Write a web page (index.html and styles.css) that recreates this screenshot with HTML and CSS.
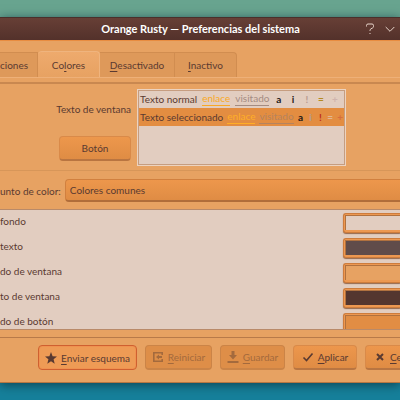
FILE: index.html
```html
<!DOCTYPE html>
<html lang="es">
<head>
<meta charset="utf-8">
<title>Orange Rusty — Preferencias del sistema</title>
<link rel="stylesheet" href="styles.css">
</head>
<body>
<main class="window">
  <header class="titlebar">
    <h1 class="title">Orange Rusty — Preferencias del sistema</h1>
    <button class="tool" aria-label="Ayuda"><svg width="10" height="12" viewBox="0 0 10 12"><path d="M1.5 3.500V2.500Q1.500 1 3 1H7Q8.500 1 8.500 2.500V3.500Q8.500 4.500 7.500 5L6 5.800Q5 6.300 5 7.500V8M5 10V11"/></svg></button>
    <button class="tool" aria-label="Minimizar"><svg width="10" height="12" viewBox="0 0 10 12"><path d="M.7 4L5 8.300L9.300 4"/></svg></button>
  </header>
  <nav class="tabs" role="tablist">
    <button class="tab tab-first" role="tab">ciones</button>
    <button class="tab active" role="tab" aria-selected="true">Co<u>l</u>ores</button>
    <button class="tab tab-wide" role="tab"><u>D</u>esactivado</button>
    <button class="tab" role="tab"><u>I</u>nactivo</button>
  </nav>
  <section class="sheet">
    <div class="preview">
      <div class="samples">
        <span>Texto de ventana</span>
        <button class="btn sample-btn">Botón</button>
      </div>
      <div class="view">
        <div class="line">
          <span>Texto normal</span><a class="link" href="#">enlace</a><a class="visited" href="#">visitado</a><b class="mark ink">a</b><b class="mark ink">i</b><b class="mark grey">!</b><b class="mark olive">=</b><b class="mark pale">+</b>
        </div>
        <div class="line selected">
          <span>Texto seleccionado</span><a class="link" href="#">enlace</a><a class="visited" href="#">visitado</a><b class="ink">a</b><b class="grey">i</b><b class="red">!</b><b class="light">=</b><b class="rust">+</b>
        </div>
      </div>
    </div>
    <div class="scheme">
      <label for="set">unto de color:</label>
      <select id="set"><option>Colores comunes</option></select>
    </div>
    <div class="list">
      <table>
        <tr><th scope="row">fondo</th><td><button class="swatch" aria-label="fondo"><span class="c-view"></span></button></td></tr>
        <tr><th scope="row">texto</th><td><button class="swatch" aria-label="texto"><span class="c-text"></span></button></td></tr>
        <tr><th scope="row">do de ventana</th><td><button class="swatch" aria-label="do de ventana"><span class="c-window"></span></button></td></tr>
        <tr><th scope="row">to de ventana</th><td><button class="swatch" aria-label="to de ventana"><span class="c-brown"></span></button></td></tr>
        <tr><th scope="row">do de botón</th><td><button class="swatch" aria-label="do de botón"><span class="c-button"></span></button></td></tr>
      </table>
    </div>
  </section>
  <footer class="actions">
    <button class="btn focus"><svg width="12" height="12" viewBox="0 0 12 12"><path d="M6 0L7.600 4.200L12 4.500L8.600 7.200L9.700 11.700L6 9.200L2.300 11.700L3.400 7.200L0 4.500L4.400 4.200Z"/></svg><span><u>E</u>nviar esquema</span></button>
    <button class="btn" disabled><svg width="12" height="12" viewBox="0 0 12 12"><path class="stroke thin" d="M10.200 4V1.800H1.800V10.200H10.200V8"/><path d="M4 6L7 3.500V5H10V7H7V8.500Z"/></svg><span><u>R</u>einiciar</span></button>
    <button class="btn save" disabled><svg width="12" height="12" viewBox="0 0 12 12"><path d="M4.500 0H7.500V4H10L6 8.500L2 4H4.500ZM.5 10H11.500V12H.5Z"/></svg><span><u>G</u>uardar</span></button>
    <button class="btn apply"><svg width="12" height="12" viewBox="0 0 12 12"><path class="stroke thin" d="M1.500 6.500L4.500 9.500L10.500 2.500"/></svg><span><u>A</u>plicar</span></button>
    <button class="btn close"><svg width="12" height="12" viewBox="0 0 12 12"><path class="stroke" d="M3 3L9 9M9 3L3 9"/></svg><span><u>C</u>e</span></button>
  </footer>
</main>
</body>
</html>
```
FILE: styles.css
```css
* { box-sizing: border-box; }
body {
  margin: 0;
  min-height: 100vh;
  padding: 17px 0 18px;
  overflow: hidden;
  background: linear-gradient(#68a48f, #68a48f 17px, #16809b 380px);
  color: #5a3a31;
  font: 10px/14px Lato, "Noto Sans", sans-serif;
}
button, select { font: inherit; color: inherit; margin: 0; padding: 0; border: 0; background: none; }
u { text-underline-offset: 2px; }
svg { flex: none; fill: currentColor; }
.stroke { fill: none; stroke: currentColor; stroke-width: 2; }
.thin { stroke-width: 1.6; }

.window { background: #e7a262; box-shadow: 0 2px 10px #0b3440cc; border-bottom: 1px solid #b67642; }
.titlebar {
  display: flex;
  align-items: center;
  gap: 10px;
  height: 24px;
  padding-right: 5px;
  background: linear-gradient(#673f36, #53312b);
  border-top: 1px solid #4a302b;
  border-bottom: 1px solid #e88c40;
  color: #fff;
}
.title { flex: 1; margin: 0; padding-left: 46px; text-align: center; font-size: 11px; font-weight: 700; white-space: nowrap; }
.tool { display: flex; color: #e8d5cb; }
.tool svg { fill: none; stroke: currentColor; }

.tabs { display: flex; align-items: flex-end; height: 37px; border-bottom: 1px solid #eeb078; }
.tab {
  height: 25px;
  padding: 0;
  background: #de995a;
  border: 1px solid #d18d50;
  border-width: 1px 1px 0 0;
}
.tab-first { width: 38px; padding-right: 12px; text-align: right; }
.tab.active { width: 62px; height: 26px; background: linear-gradient(#eeaa6d, #e7a262); border-color: #efb47e; border-radius: 4px 4px 0 0; }
.tab-wide { width: 75px; }
.tab:last-child { width: 62px; border-radius: 0 4px 0 0; }

.sheet { margin-top: 4px; border-top: 2px solid #c98850; }
.preview { display: flex; gap: 6px; padding: 5px 0 4px; border-bottom: 1px solid #d79659; }
.samples { display: flex; flex-direction: column; align-items: flex-end; gap: 20px; width: 131px; padding-top: 13px; }
.btn {
  display: flex;
  align-items: center;
  justify-content: center;
  gap: 4px;
  height: 25px;
  padding: 0 6px;
  white-space: nowrap;
  background: linear-gradient(#ed974c, #df8c44);
  border: 1px solid #d98a49;
  border-bottom: 2px solid #b97541;
  border-radius: 4px;
}
.sample-btn { width: 72px; }
.view { width: 209px; height: 77px; padding: 0 1px; background: #e2cdc0; border: 1px solid #ecd3c0; box-shadow: inset 0 0 0 1px #c69d80; }
.line { display: flex; align-items: center; gap: 5px; height: 18px; padding: 0 1px; white-space: nowrap; }
.selected { background: #e38d41; }
.link { color: #f9a825; }
.visited { color: #a48c82; }
.line a { text-decoration: none; border-bottom: 1px solid; line-height: 13px; }
.mark { width: 9px; text-align: center; }
.ink { color: #251917; }
.grey { color: #b99c90; }
.olive { color: #b48a20; }
.pale { color: #d0b4ae; }
.red { color: #bd2d20; }
.light { color: #e1b690; }
.rust { color: #d66c3e; }
.selected b { width: 6px; text-align: center; }
.selected { gap: 4px; }
.selected .link { color: #ffae27; }
.selected .visited { color: #b5835e; }

.scheme { display: flex; align-items: center; gap: 4px; padding: 8px 0 7px; white-space: nowrap; }
.scheme select {
  appearance: none;
  flex: 1;
  height: 23px;
  padding: 0 4px;
  background: linear-gradient(#ed974c, #df8c44);
  border: 1px solid #d1803f;
  border-width: 1px 0 2px 1px;
  border-bottom-color: #b06d3a;
  border-radius: 4px 0 0 4px;
}

.list { height: 121px; overflow: hidden; background: #e2cdc0; border: 1px solid #b98a69; border-width: 1px 0; }
table { width: 100%; border-collapse: collapse; }
tr { height: 25px; }
th, td { padding: 0; }
th { padding-bottom: 3px; text-align: left; font-weight: 400; }
td { width: 57px; }
.swatch {
  display: block;
  width: 100%;
  height: 20px;
  padding: 1px 0 2px 1px;
  background: #ed9851;
  border: 1px solid #ce7c3c;
  border-right: 0;
  border-radius: 3px 0 0 3px;
  box-shadow: 0 1px 1px #96694c;
}
.swatch span { display: block; height: 100%; border: 1px solid #b0713f; border-width: 1px 0 0 1px; }
.c-view { background: #e2cdc0; }
.c-text { background: #604c4a; }
.c-window { background: #e7a262; }
.c-brown { background: #54362f; }
.c-button { background: #e18d44; }

.actions { display: flex; gap: 8px; margin-top: 7px; padding: 7px 0 12px 38px; border-top: 1px solid #b87a49; overflow: hidden; }
.actions .btn { flex: none; width: 67px; }
.actions .focus { width: 99px; background: #ee9b55; border: 1px solid #cf6030; box-shadow: inset 0 0 0 1px #f0914f; }
.btn:disabled { color: #a46a3d; background: #de8e48; border-color: #cb8447; }
.actions .save { width: 65px; }
.actions .apply { width: 64px; }
.actions .close { flex: 1; width: auto; padding: 0 0 0 8px; justify-content: flex-start; border-right: 0; border-radius: 4px 0 0 4px; }
```
